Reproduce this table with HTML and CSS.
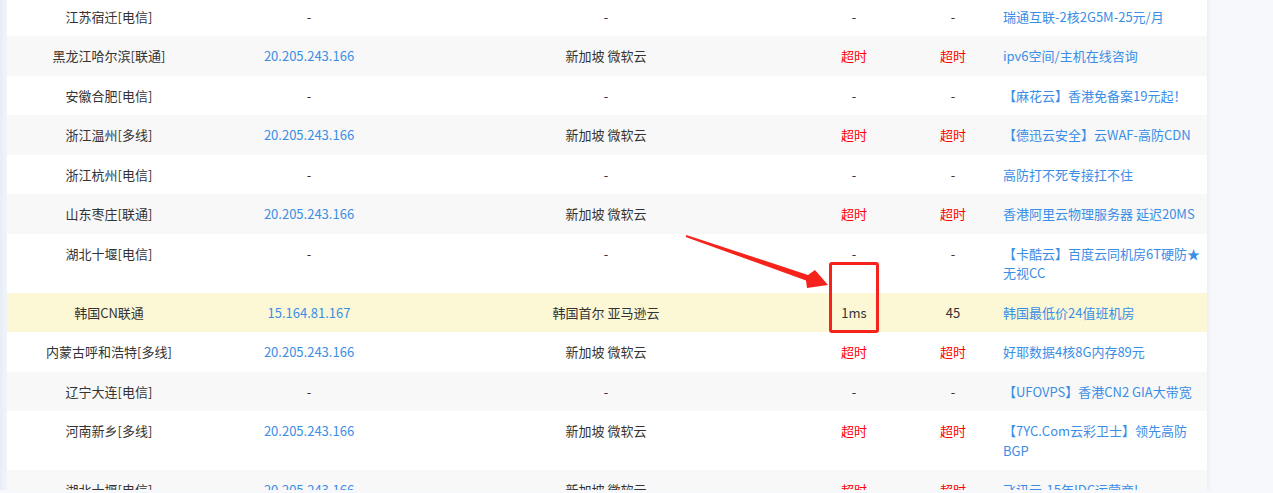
FILE: index.html
```html
<!DOCTYPE html>
<html lang="zh-CN">
<head>
  <meta charset="UTF-8" />
  <title>测速结果</title>
  <link rel="stylesheet" href="styles.css">
</head>
<body>
  <div class="board">
    <table class="result">
      <colgroup>
        <col class="c-node">
        <col class="c-ip">
        <col class="c-loc">
        <col class="c-time">
        <col class="c-ttl">
        <col class="c-ad">
      </colgroup>
      <tbody>
        <tr>
          <td>江苏宿迁[电信]</td><td>-</td><td>-</td><td>-</td><td>-</td>
          <td class="ad">瑞通互联-2核2G5M-25元/月</td>
        </tr>
        <tr>
          <td>黑龙江哈尔滨[联通]</td><td class="ip">20.205.243.166</td><td>新加坡 微软云</td>
          <td class="fail">超时</td><td class="fail">超时</td>
          <td class="ad">ipv6空间/主机在线咨询</td>
        </tr>
        <tr>
          <td>安徽合肥[电信]</td><td>-</td><td>-</td><td>-</td><td>-</td>
          <td class="ad">【麻花云】香港免备案19元起！</td>
        </tr>
        <tr>
          <td>浙江温州[多线]</td><td class="ip">20.205.243.166</td><td>新加坡 微软云</td>
          <td class="fail">超时</td><td class="fail">超时</td>
          <td class="ad">【德迅云安全】云WAF-高防CDN</td>
        </tr>
        <tr>
          <td>浙江杭州[电信]</td><td>-</td><td>-</td><td>-</td><td>-</td>
          <td class="ad">高防打不死专接扛不住</td>
        </tr>
        <tr>
          <td>山东枣庄[联通]</td><td class="ip">20.205.243.166</td><td>新加坡 微软云</td>
          <td class="fail">超时</td><td class="fail">超时</td>
          <td class="ad">香港阿里云物理服务器 延迟20MS</td>
        </tr>
        <tr>
          <td>湖北十堰[电信]</td><td>-</td><td>-</td><td>-</td><td>-</td>
          <td class="ad">【卡酷云】百度云同机房6T硬防★无视CC</td>
        </tr>
        <tr class="mark">
          <td>韩国CN联通</td><td class="ip">15.164.81.167</td><td>韩国首尔 亚马逊云</td>
          <td>1ms</td><td>45</td>
          <td class="ad">韩国最低价24值班机房</td>
        </tr>
        <tr>
          <td>内蒙古呼和浩特[多线]</td><td class="ip">20.205.243.166</td><td>新加坡 微软云</td>
          <td class="fail">超时</td><td class="fail">超时</td>
          <td class="ad">好耶数据4核8G内存89元</td>
        </tr>
        <tr>
          <td>辽宁大连[电信]</td><td>-</td><td>-</td><td>-</td><td>-</td>
          <td class="ad">【UFOVPS】香港CN2 GIA大带宽</td>
        </tr>
        <tr>
          <td>河南新乡[多线]</td><td class="ip">20.205.243.166</td><td>新加坡 微软云</td>
          <td class="fail">超时</td><td class="fail">超时</td>
          <td class="ad">【7YC.Com云彩卫士】领先高防BGP</td>
        </tr>
        <tr>
          <td>湖北十堰[电信]</td><td class="ip">20.205.243.166</td><td>新加坡 微软云</td>
          <td class="fail">超时</td><td class="fail">超时</td>
          <td class="ad">飞讯云-15年IDC运营商!</td>
        </tr>
      </tbody>
    </table>

    <!-- annotation drawn over the table -->
    <svg class="arrow" width="1273" height="493" viewBox="0 0 1273 493">
      <polygon fill="#f5231b" points="686.3,238 808,277.9 815,273 828,288 807,291 806,283.5 685.7,240"/>
    </svg>
    <div class="hilite-box"></div>
  </div>
</body>
</html>
```

FILE: styles.css
```css
body {
  margin: 0;
  background: #f6f8fb;
  font-family: "Microsoft YaHei", "Noto Sans CJK SC", sans-serif;
  font-size: 13px;
  color: #333;
  overflow: hidden;
}
.board {
  position: relative;
  height: 493px;
  padding-left: 7px;
  background: linear-gradient(90deg, #e6edf7 0, #f1f5fb 6px, transparent 7px);
}
.result {
  width: 1200px;
  margin-top: -3.5px;
  border-collapse: collapse;
  table-layout: fixed;
  background: #fff;
  box-shadow: 1px 0 4px rgba(40, 80, 160, 0.08);
}
.c-node { width: 204px; }
.c-ip { width: 196px; }
.c-loc { width: 398px; }
.c-time { width: 98px; }
.c-ttl { width: 100px; }
.c-ad { width: 204px; }
.result td {
  padding: 10px 0;
  line-height: 19.5px;
  text-align: center;
  vertical-align: top;
}
.result tr:nth-child(even) {
  background: #f8f8f8;
}
.result tr.mark {
  background: #fcf8d6;
}
.result td.ip {
  color: #3a8ee6;
}
.result td.fail {
  color: #ff0000;
}
.result td.ad {
  text-align: left;
  color: #3a8ee6;
}
.arrow {
  position: absolute;
  top: 0;
  left: 0;
  pointer-events: none;
}
.hilite-box {
  position: absolute;
  left: 829px;
  top: 265px;
  width: 44px;
  height: 65px;
  border: 3px solid #f5231b;
  border-radius: 3px;
}
```
